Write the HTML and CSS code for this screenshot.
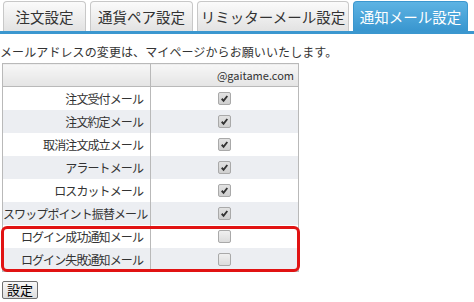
FILE: index.html
```html
<!DOCTYPE html>
<html lang="ja">
<head>
    <meta charset="UTF-8">
    <title>通知メール設定</title>
    <link rel="stylesheet" href="styles.css">
</head>
<body>
    <ul class="tabs">
        <li class="tab tab-order">注文設定</li>
        <li class="tab tab-pair">通貨ペア設定</li>
        <li class="tab tab-limit">リミッターメール設定</li>
        <li class="tab tab-notice active">通知メール設定</li>
    </ul>
    <div class="tab-bar"></div>

    <p class="note">メールアドレスの変更は、マイページからお願いいたします。</p>

    <div class="table-wrap">
        <table class="mail-table">
            <thead>
                <tr>
                    <th class="label"></th>
                    <th class="addr">@gaitame.com</th>
                </tr>
            </thead>
            <tbody>
                <tr><td class="label">注文受付メール</td><td class="cell"><span class="check on"><svg viewBox="0 0 13 13"><path d="M3.2 6.8 L5.4 9.2 L9.8 3.6"/></svg></span></td></tr>
                <tr><td class="label">注文約定メール</td><td class="cell"><span class="check on"><svg viewBox="0 0 13 13"><path d="M3.2 6.8 L5.4 9.2 L9.8 3.6"/></svg></span></td></tr>
                <tr><td class="label">取消注文成立メール</td><td class="cell"><span class="check on"><svg viewBox="0 0 13 13"><path d="M3.2 6.8 L5.4 9.2 L9.8 3.6"/></svg></span></td></tr>
                <tr><td class="label">アラートメール</td><td class="cell"><span class="check on"><svg viewBox="0 0 13 13"><path d="M3.2 6.8 L5.4 9.2 L9.8 3.6"/></svg></span></td></tr>
                <tr><td class="label">ロスカットメール</td><td class="cell"><span class="check on"><svg viewBox="0 0 13 13"><path d="M3.2 6.8 L5.4 9.2 L9.8 3.6"/></svg></span></td></tr>
                <tr><td class="label">スワップポイント振替メール</td><td class="cell"><span class="check on"><svg viewBox="0 0 13 13"><path d="M3.2 6.8 L5.4 9.2 L9.8 3.6"/></svg></span></td></tr>
                <tr><td class="label">ログイン成功通知メール</td><td class="cell"><span class="check"></span></td></tr>
                <tr><td class="label">ログイン失敗通知メール</td><td class="cell"><span class="check"></span></td></tr>
            </tbody>
        </table>
        <!-- highlight around the two login rows -->
        <div class="highlight"></div>
    </div>

    <button class="submit">設定</button>
</body>
</html>
```

FILE: styles.css
```css
body {
    margin: 0;
    font-family: "Noto Sans CJK JP", "Noto Sans", sans-serif;
    font-size: 12px;
    color: #333;
    background: #fff;
}
.tabs {
    display: flex;
    gap: 4px;
    list-style: none;
    margin: 0;
    padding: 1px 0 0 3px;
    height: 30px;
}
.tab {
    box-sizing: border-box;
    height: 30px;
    line-height: 29px;
    text-align: center;
    font-size: 14.5px;
    color: #333;
    border: 1px solid #c8c8c8;
    border-bottom: none;
    border-radius: 4px 4px 0 0;
    background: linear-gradient(#fbfbfb, #e2e2e2);
}
.tab-order { width: 83px; }
.tab-pair { width: 103px; }
.tab-limit { width: 152px; }
.tab-notice { width: 115px; }
.tab.active {
    color: #fff;
    border-color: #3b97cf;
    background: linear-gradient(#5db3e3, #3996cf);
}
.tab-bar {
    height: 3px;
    background: #3b97cf;
}
.note {
    margin: 8px 0 0;
    line-height: 19px;
    letter-spacing: 0.1px;
}
.table-wrap {
    position: relative;
    margin: 2px 0 0 2px;
    width: 297px;
}
.mail-table {
    border-collapse: collapse;
    table-layout: fixed;
    width: 297px;
    border: 1px solid #b9b9b9;
}
.mail-table th {
    height: 22px;
    padding: 0 4px;
    font-weight: normal;
    font-size: 11px;
    text-align: right;
    background: linear-gradient(#f7f7f7, #e4e4e4);
    border: 1px solid #b9b9b9;
}
.mail-table td {
    height: 23px;
    padding: 0 7px 0 0;
    line-height: 23px;
    white-space: nowrap;
}
.mail-table .label {
    width: 148px;
    box-sizing: border-box;
}
.mail-table td.label {
    text-align: right;
    letter-spacing: -0.9px;
    border-right: 1px solid #b9b9b9;
}
.mail-table td.cell {
    text-align: center;
    padding: 0;
}
.mail-table tbody tr:nth-child(even) {
    background: #eceef2;
}
.check {
    display: inline-block;
    box-sizing: border-box;
    width: 13px;
    height: 13px;
    margin-top: 5px;
    vertical-align: top;
    border: 1px solid #a9a9a9;
    border-radius: 2px;
    background: linear-gradient(#f0f0f0, #dcdcdc);
}
.check.on {
    background: linear-gradient(#e2e2e2, #cfcfcf);
}
.check svg {
    display: block;
    width: 11px;
    height: 11px;
    fill: none;
    stroke: #333;
    stroke-width: 2.2;
}
.highlight {
    position: absolute;
    left: -1px;
    right: -1px;
    bottom: 0;
    height: 46px;
    box-sizing: border-box;
    border: 3px solid #e11313;
    border-radius: 6px;
}
.submit {
    margin: 9px 0 0 2px;
    padding: 0 4px;
    height: 18px;
    font-family: "Noto Sans CJK JP", sans-serif;
    font-size: 13px;
    line-height: 14px;
    color: #000;
    background: linear-gradient(#f8f8f8, #dedede);
    border: 1px solid #707070;
    border-radius: 2px;
}
```
